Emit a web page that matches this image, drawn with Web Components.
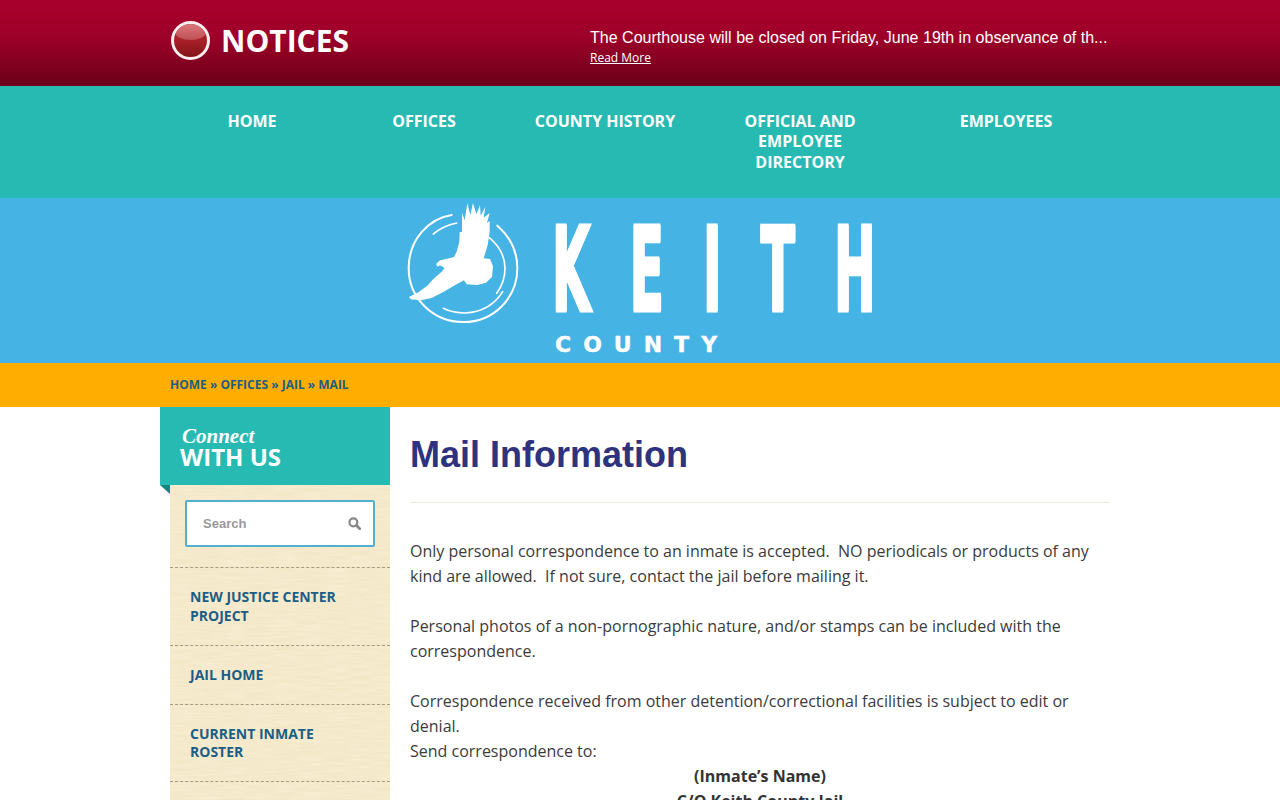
<!DOCTYPE html>
<html lang="en">
<head>
<meta charset="utf-8">
<title>Mail Information - Keith County</title>
<style>
	html, body { margin: 0; padding: 0; height: 800px; overflow: hidden; background: #fff; }
	body { font-family: "Open Sans", sans-serif; }
</style>
</head>
<body>
<notice-bar text="The Courthouse will be closed on Friday, June 19th in observance of th..."></notice-bar>
<main-nav></main-nav>
<logo-banner></logo-banner>
<bread-crumbs></bread-crumbs>
<page-body>
	<connect-sidebar slot="side">
		<side-link>NEW JUSTICE CENTER PROJECT</side-link>
		<side-link>JAIL HOME</side-link>
		<side-link>CURRENT INMATE ROSTER</side-link>
		<side-link>INMATE INFORMATION</side-link>
	</connect-sidebar>
	<mail-article>
		Only personal correspondence to an inmate is accepted.&nbsp; NO periodicals or products of any kind are allowed.&nbsp; If not sure, contact the jail before mailing it.<br><br>
		Personal photos of a non-pornographic nature, and/or stamps can be included with the correspondence.<br><br>
		Correspondence received from other detention/correctional facilities is subject to edit or denial.<br>
		Send correspondence to:<br>
		<div style="text-align:center;font-weight:700;color:#333">(Inmate’s Name)<br>C/O Keith County Jail</div>
	</mail-article>
</page-body>

<script>
class NoticeBar extends HTMLElement {
	connectedCallback() {
		this.attachShadow({ mode: 'open' });
		this.shadowRoot.innerHTML = `
			<style>
				:host { display: block; height: 86px; background: linear-gradient(#a9002d 0%, #9c0029 45%, #6a0019 100%); color: #fff; }
				.wrap { width: 938px; height: 86px; margin: 0 auto; display: flex; box-sizing: border-box; }
				.title { width: 419px; flex: none; display: flex; align-items: center; gap: 11px; padding-bottom: 5px; box-sizing: border-box;
					font: 700 30px "Open Sans", sans-serif; }
				.ball { width: 33px; height: 33px; border: 3px solid #fbeeee; border-radius: 50%; flex: none; position: relative; overflow: hidden;
					background: linear-gradient(#b02a33 0%, #a82028 50%, #821418 100%); }
				.ball::before { content: ''; position: absolute; left: 1px; right: 1px; top: 0; height: 16px; border-radius: 50%;
					background: linear-gradient(#d9797c, #bf4f55); }
				.msg { padding-top: 27px; min-width: 0; }
				.line { font: 16.05px/21px "Liberation Sans", Arial, sans-serif; white-space: nowrap; }
				a { display: block; font: 12px/19px "Open Sans", sans-serif; color: #fff; text-decoration: underline; }
			</style>
			<div class="wrap">
				<div class="title"><span class="ball"></span>NOTICES</div>
				<div class="msg">
					<div class="line">${this.getAttribute('text')}</div>
					<a href="#">Read More</a>
				</div>
			</div>`;
	}
}
customElements.define('notice-bar', NoticeBar);

class MainNav extends HTMLElement {
	connectedCallback() {
		this.attachShadow({ mode: 'open' });
		const items = ['HOME', 'OFFICES', 'COUNTY HISTORY', 'OFFICIAL AND<br>EMPLOYEE<br>DIRECTORY', 'EMPLOYEES'];
		this.shadowRoot.innerHTML = `
			<style>
				:host { display: block; height: 112px; background: #27bab3; }
				ul { list-style: none; margin: 0 auto; padding: 24.6px 0 0; width: 940px; display: grid;
					grid-template-columns: 164px 180px 182px 208px 204px; }
				li { text-align: center; font: 700 16px/20.5px "Open Sans", sans-serif; color: #fff; }
			</style>
			<ul>${items.map(i => `<li>${i}</li>`).join('')}</ul>`;
	}
}
customElements.define('main-nav', MainNav);

class LogoBanner extends HTMLElement {
	connectedCallback() {
		this.attachShadow({ mode: 'open' });
		this.shadowRoot.innerHTML = `
			<style>
				:host { display: block; height: 165px; background: #45b4e5; }
				.logo { width: 470px; height: 165px; margin: 0 auto; display: flex; }
				svg { width: 150px; height: 140px; margin: -3px 0 0 -15px; flex: none; display: block; }
				.words { margin-left: 12px; color: #fff; width: 330px; }
				.keith { display: block; margin-top: .7px; height: 124px; white-space: nowrap; transform-origin: 0 0; transform: scaleX(.426);
					font: 700 117px/144px "DejaVu Sans", sans-serif; letter-spacing: 92px; -webkit-text-stroke: 3px #fff;
					text-shadow: 2px 0 #fff, -2px 0 #fff; }
				.county { margin: 7.8px 0 0 3px; font: 700 22px/30px "DejaVu Sans", sans-serif; letter-spacing: 12px; white-space: nowrap; -webkit-text-stroke: .4px #fff; }
			</style>
			<div class="logo">
				<svg viewBox="0 0 450 420" aria-hidden="true">
					<g fill="none" stroke="#fff" stroke-linecap="round">
						<path stroke-width="6" d="M185 60C120 70 56 130 56 220C56 310 130 381 220 381C310 381 382 310 382 220C382 170 360 125 322 92"/>
						<path stroke-width="5" d="M130 117C150 100 172 90 200 84"/>
						<path stroke-width="5" d="M298 128C330 155 345 185 345 220C345 250 335 275 320 295"/>
						<path stroke-width="5" d="M338 290C310 335 270 352 225 354C200 354 180 350 160 340"/>
					</g>
					<path fill="#fff" d="M138 207L150 196L172 191L192 186L200 170L208 140L209 112L216 110L216 54L224 76L232 25L241 60L249 24L259 58L270 31L272 62L286 36L281 68L299 54L291 84L299 78L299 112L293 150L281 190L300 192L309 214L306 246L288 263L262 270L230 268L222 256L196 270L160 291L125 309L92 316L62 313L57 306L85 292L112 272L130 252L155 230L164 219L150 211L143 215Z"/>
				</svg>
				<div class="words">
					<span class="keith">KEITH</span>
					<div class="county">COUNTY</div>
				</div>
			</div>`;
	}
}
customElements.define('logo-banner', LogoBanner);

class BreadCrumbs extends HTMLElement {
	connectedCallback() {
		this.attachShadow({ mode: 'open' });
		this.shadowRoot.innerHTML = `
			<style>
				:host { display: block; height: 44px; background: #ffae00; }
				div { width: 940px; margin: 0 auto; font: 700 12px/44px "Open Sans", sans-serif; color: #1b5e85; }
			</style>
			<div>HOME » OFFICES » JAIL » MAIL</div>`;
	}
}
customElements.define('bread-crumbs', BreadCrumbs);

class PageBody extends HTMLElement {
	connectedCallback() {
		this.attachShadow({ mode: 'open' });
		this.shadowRoot.innerHTML = `
			<style>
				:host { display: grid; grid-template-columns: 230px 700px; column-gap: 20px; width: 960px; margin: 0 auto; }
			</style>
			<slot name="side"></slot>
			<slot></slot>`;
	}
}
customElements.define('page-body', PageBody);

// paper grain for the sidebar panel
const paper = "data:image/svg+xml," + encodeURIComponent(
	'<svg xmlns="http://www.w3.org/2000/svg" width="300" height="300"><filter id="n"><feTurbulence type="fractalNoise" baseFrequency="0.04 0.5" numOctaves="2" stitchTiles="stitch"/><feColorMatrix values="0 0 0 0 0.7 0 0 0 0 0.58 0 0 0 0 0.3 0 0 0 0.3 -0.08"/></filter><rect width="300" height="300" filter="url(#n)"/></svg>');

class ConnectSidebar extends HTMLElement {
	connectedCallback() {
		this.attachShadow({ mode: 'open' });
		this.shadowRoot.innerHTML = `
			<style>
				:host { display: block; }
				.head { height: 78px; background: #27bab3; color: #fff; padding: 20px 0 0 20px; box-sizing: border-box; position: relative; }
				.head::after { content: ''; position: absolute; left: 0; top: 78px; border-style: solid; border-width: 0 10px 9px 0;
					border-color: transparent #17857f transparent transparent; }
				.script { font: italic 700 21px/19px "Liberation Serif", serif; margin-left: 2px; }
				.with { font: 700 24px/21px "Open Sans", sans-serif; }
				.panel { margin-left: 10px; padding-top: 15px; height: 600px; box-sizing: border-box;
					background: #f7ecd0 url("${paper}"); }
				.search { width: 190px; height: 47px; margin-left: 15px; margin-bottom: 20px; box-sizing: border-box; border: 2px solid #52b0cd; border-radius: 2px; background: #fff;
					display: flex; align-items: center; justify-content: space-between; padding: 0 12px 0 16px;
					font: 700 13px "Liberation Sans", Arial, sans-serif; color: #999; }
				svg { width: 13px; height: 13px; display: block; }
			</style>
			<div class="head">
				<div class="script">Connect</div>
				<div class="with">WITH US</div>
			</div>
			<div class="panel">
				<div class="search">Search
					<svg viewBox="0 0 14 14"><circle cx="5.8" cy="5.8" r="4.2" fill="none" stroke="#888" stroke-width="2.4"/><path d="M9.2 9.2l3.4 3.4" stroke="#888" stroke-width="3" stroke-linecap="round"/></svg>
				</div>
				<slot></slot>
			</div>`;
	}
}
customElements.define('connect-sidebar', ConnectSidebar);

class SideLink extends HTMLElement {
	connectedCallback() {
		this.attachShadow({ mode: 'open' });
		this.shadowRoot.innerHTML = `
			<style>
				:host { display: block; border-top: 1px dashed #a89a80; padding: 20px 40px 19.5px 20px;
					font: 700 14px/18.5px "Open Sans", sans-serif; color: #1b5e85; }
			</style>
			<slot></slot>`;
	}
}
customElements.define('side-link', SideLink);

class MailArticle extends HTMLElement {
	connectedCallback() {
		this.attachShadow({ mode: 'open' });
		this.shadowRoot.innerHTML = `
			<style>
				:host { display: block; color: #3b3b3b; font: 16px/25px "Open Sans", sans-serif; }
				h1 { margin: 0; padding: 27px 0 1px; height: 67px; font: 700 36px/41px "Liberation Sans", Arial, sans-serif; color: #2f327f; border-bottom: 1px solid #efebdc; }
				.text { padding-top: 36px; }
			</style>
			<h1>Mail Information</h1>
			<div class="text"><slot></slot></div>`;
	}
}
customElements.define('mail-article', MailArticle);
</script>
</body>
</html>
